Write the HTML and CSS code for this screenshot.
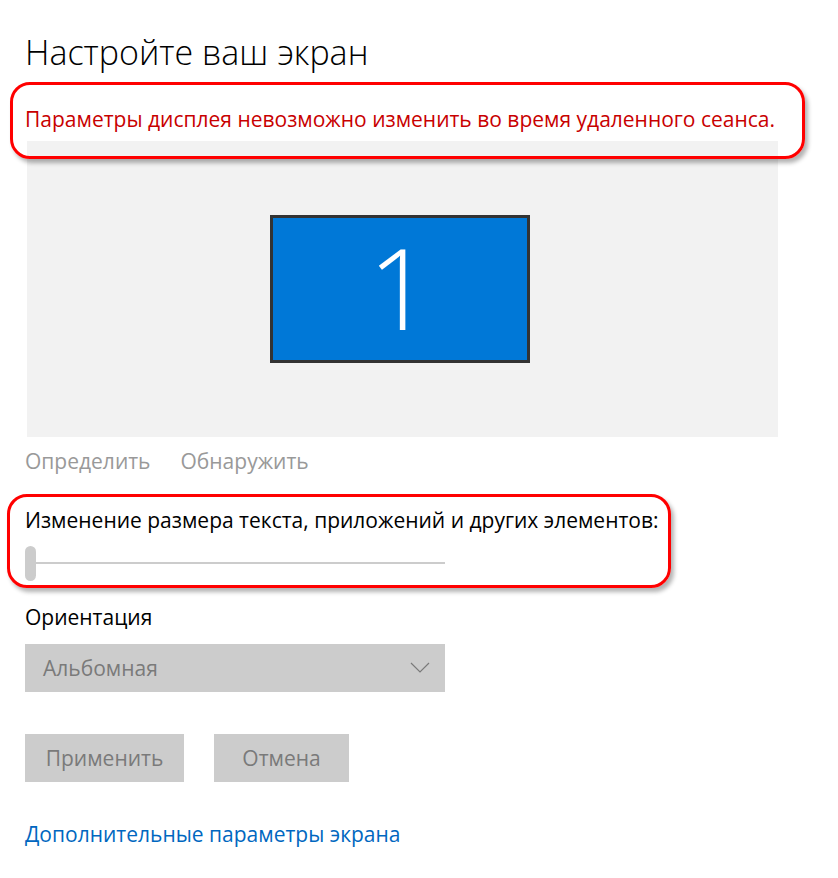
FILE: index.html
```html
<!DOCTYPE html>
<html lang="ru">
<head>
    <meta charset="UTF-8">
    <title>Настройте ваш экран</title>
    <link rel="stylesheet" href="styles.css">
</head>
<body>

<div class="page">
    <h1 class="title">Настройте ваш экран</h1>
    <p class="warning">Параметры дисплея невозможно изменить во время удаленного сеанса.</p>

    <div class="preview">
        <div class="monitor">1</div>
    </div>

    <div class="actions">
        <span>Определить</span>
        <span>Обнаружить</span>
    </div>

    <div class="scale">
        <div class="label">Изменение размера текста, приложений и других элементов:</div>
        <div class="slider">
            <div class="track"></div>
            <div class="thumb"></div>
        </div>
    </div>

    <div class="label orient">Ориентация</div>
    <div class="select">
        <span>Альбомная</span>
        <svg width="20" height="12" viewBox="0 0 20 12">
            <polyline points="1,1 10,10 19,1" fill="none" stroke="#7a7a7a" stroke-width="1.2"/>
        </svg>
    </div>

    <div class="buttons">
        <button class="btn apply">Применить</button>
        <button class="btn cancel">Отмена</button>
    </div>

    <a class="more" href="#">Дополнительные параметры экрана</a>

    <!-- red annotation frames drawn over the page -->
    <div class="mark mark-top"></div>
    <div class="mark mark-scale"></div>
</div>

</body>
</html>
```

FILE: styles.css
```css
body {
    margin: 0;
    background: #fff;
    font-family: "Open Sans", "Noto Sans", sans-serif;
    color: #000;
}
.page {
    position: relative;
    padding: 27px 0 0 25px;
    width: 754px;
}
.title {
    margin: 0;
    font-size: 34px;
    font-weight: 300;
    line-height: 50px;
}
.warning {
    margin: 28px 0 0;
    font-size: 21px;
    line-height: 28px;
    color: #c80000;
}
.preview {
    margin: 8px 0 0 2px;
    height: 296px;
    width: 751px;
    background: #f2f2f2;
    display: flex;
    justify-content: center;
    align-items: center;
}
.monitor {
    width: 254px;
    height: 142px;
    margin-right: 5px;
    border: 3px solid #333;
    background: #0078d7;
    color: #fff;
    font-size: 112px;
    font-weight: 300;
    line-height: 138px;
    text-align: center;
}
.actions {
    margin-top: 10px;
    display: flex;
    gap: 30px;
    font-size: 21px;
    line-height: 28px;
    color: #999;
}
.scale {
    margin-top: 31px;
}
.label {
    font-size: 21px;
    line-height: 28px;
}
.slider {
    position: relative;
    width: 420px;
    height: 35px;
    margin-top: 12px;
}
.track {
    position: absolute;
    left: 5px;
    right: 0;
    top: 16px;
    height: 2px;
    background: #ccc;
}
.thumb {
    position: absolute;
    left: 0;
    top: 0;
    width: 11px;
    height: 35px;
    border-radius: 6px;
    background: #ccc;
}
.orient {
    margin-top: 22px;
}
.select {
    margin-top: 13px;
    width: 420px;
    height: 48px;
    background: #ccc;
    color: #7a7a7a;
    font-size: 21px;
    display: flex;
    align-items: center;
    justify-content: space-between;
    padding: 0 15px 0 18px;
    box-sizing: border-box;
}
.buttons {
    margin-top: 42px;
    display: flex;
    gap: 30px;
}
.btn {
    height: 48px;
    border: 0;
    background: #ccc;
    color: #7a7a7a;
    font-family: inherit;
    font-size: 21px;
    padding: 0;
}
.apply {
    width: 159px;
}
.cancel {
    width: 135px;
}
.more {
    display: inline-block;
    margin-top: 38px;
    font-size: 21px;
    line-height: 28px;
    color: #0067c0;
    text-decoration: none;
}
.mark {
    position: absolute;
    border: 3px solid #f00;
    border-radius: 20px;
    box-shadow: 3px 4px 4px rgba(0, 0, 0, 0.3);
    box-sizing: border-box;
}
.mark-top {
    left: 10px;
    top: 82px;
    width: 795px;
    height: 77px;
}
.mark-scale {
    left: 7px;
    top: 494px;
    width: 664px;
    height: 94px;
}
```
